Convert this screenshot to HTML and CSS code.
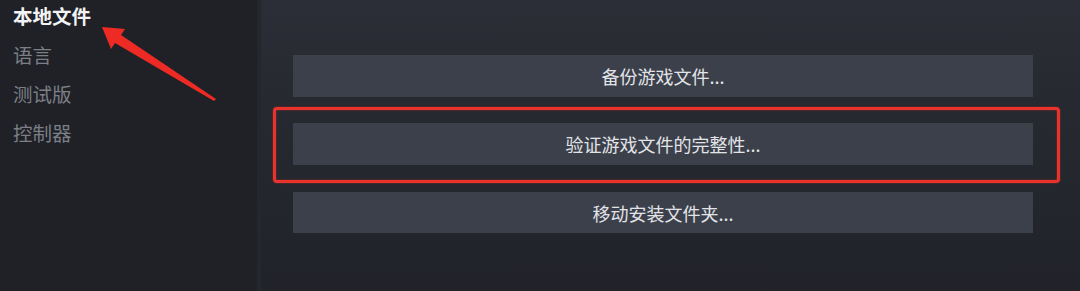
FILE: index.html
```html
<!DOCTYPE html>
<html lang="zh-CN">
<head>
<meta charset="utf-8">
<link rel="stylesheet" href="styles.css">
</head>
<body>
<div class="app">
  <nav class="sidebar">
    <div class="item active">本地文件</div>
    <div class="item">语言</div>
    <div class="item">测试版</div>
    <div class="item">控制器</div>
  </nav>
  <main class="main">
    <div class="btn">备份游戏文件...</div>
    <div class="btn">验证游戏文件的完整性...</div>
    <div class="btn">移动安装文件夹...</div>
  </main>
  <div class="highlight"></div>
  <svg class="arrow" width="130" height="90" viewBox="95 20 130 90">
    <polygon points="102,27 125,29 121,35 216,99 214,101 115,43 111,49" fill="#ee2a24"/>
  </svg>
</div>
</body>
</html>
```
FILE: styles.css
```css
html, body {
  margin: 0;
  padding: 0;
  background: #202228;
}
.app {
  position: relative;
  display: flex;
  width: 1080px;
  height: 291px;
  overflow: hidden;
  font-family: "Noto Sans CJK SC", "Noto Sans", sans-serif;
}
.sidebar {
  width: 257px;
  flex: none;
  background: #1f2127;
  padding-left: 13px;
  box-sizing: border-box;
  margin-top: -4px;
}
.item {
  font-size: 19.5px;
  line-height: 39px;
  color: #7c7f86;
}
.item.active {
  color: #f2f3f5;
  font-weight: bold;
}
.main {
  flex: 1;
  display: flex;
  flex-direction: column;
  gap: 26px;
  padding: 55px 47px 0 32px;
  background: linear-gradient(180deg, #2b2e36 0%, #25282f 45%, #212329 100%);
  border-left: 4px solid #25272e;
  box-sizing: border-box;
}
.btn {
  height: 42px;
  display: flex;
  align-items: center;
  justify-content: center;
  background: #3c404b;
  color: #e2e4e8;
  font-size: 18px;
}
.btn:nth-child(3) {
  height: 41px;
  margin-top: 1px;
}
.highlight {
  position: absolute;
  left: 273px;
  top: 107px;
  width: 787px;
  height: 76px;
  box-sizing: border-box;
  border: 3px solid #e8322c;
  border-radius: 4px;
  box-shadow: 0 0 2px rgba(232, 50, 44, 0.6), inset 0 0 2px rgba(232, 50, 44, 0.6);
}
.arrow {
  position: absolute;
  left: 95px;
  top: 20px;
}
```
